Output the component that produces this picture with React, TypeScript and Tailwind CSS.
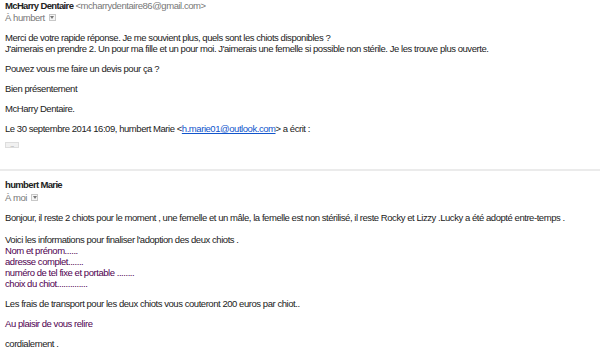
import React from "react";

const Drop = () => (
  <span className="inline-flex items-center justify-center w-[7px] h-[7px] border border-[#c8c8c8] bg-[#f5f5f5] ml-[4px]">
    <svg width="4" height="3" viewBox="0 0 4 3"><path d="M0 0h4L2 3z" fill="#777" /></svg>
  </span>
);

export default function App() {
  return (
    <div className="w-[600px] h-[352px] bg-white overflow-hidden text-[9.5px] leading-[11px] tracking-[-0.45px] text-[#222]" style={{ fontFamily: '"Liberation Sans", Arial, sans-serif' }}>
      <div className="px-[5px] pt-[0px]">
        <div className="h-[11px]"><span className="font-bold tracking-[-0.65px]">McHarry Dentaire</span> <span className="text-[#777]">&lt;mcharrydentaire86@gmail.com&gt;</span></div>
        <div className="h-[11px] mt-[1px] text-[#777] flex items-center">À humbert <Drop /></div>
        <div className="mt-[9px] flex flex-col gap-[9px]">
          <div>
            <div>Merci de votre rapide réponse. Je me souvient plus, quels sont les chiots disponibles ?</div>
            <div>J'aimerais en prendre 2. Un pour ma fille et un pour moi. J'aimerais une femelle si possible non stérile. Je les trouve plus ouverte.</div>
          </div>
          <div>Pouvez vous me faire un devis pour ça ?</div>
          <div>Bien présentement</div>
          <div>McHarry Dentaire.</div>
          <div>Le 30 septembre 2014 16:09, humbert Marie &lt;<span className="text-[#15c] underline">h.marie01@outlook.com</span>&gt; a écrit :</div>
        </div>
        <div className="mt-[8px] w-[14px] h-[6px] bg-[#f1f1f1] border border-[#ddd] flex items-center justify-center text-[6px] leading-[6px] text-[#777]">...</div>
      </div>
      <div className="mt-[21px] h-[2px] bg-[#ebebeb]" />
      <div className="px-[5px] pt-[8px]">
        <div className="h-[11px] font-bold tracking-[-0.65px]">humbert Marie</div>
        <div className="h-[11px] mt-[2px] text-[#777] flex items-center">À moi <Drop /></div>
        <div className="mt-[9px] flex flex-col gap-[9px]">
          <div>
            <div>Bonjour, il reste 2 chiots pour le moment , une femelle et un mâle, la femelle est non stérilisé, il reste Rocky et Lizzy .Lucky a été adopté entre-temps .</div>
            <div>&nbsp;</div>
            <div>Voici les informations pour finaliser l'adoption des deux chiots .</div>
            <div className="text-[#500050]">
              <div>Nom et prénom......</div>
              <div>adresse complet.......</div>
              <div>numéro de tel fixe et portable ........</div>
              <div>choix du chiot..............</div>
            </div>
          </div>
          <div>Les frais de transport pour les deux chiots vous couteront 200 euros par chiot..</div>
          <div className="text-[#500050]">Au plaisir de vous relire</div>
          <div>cordialement .</div>
        </div>
      </div>
    </div>
  );
}
